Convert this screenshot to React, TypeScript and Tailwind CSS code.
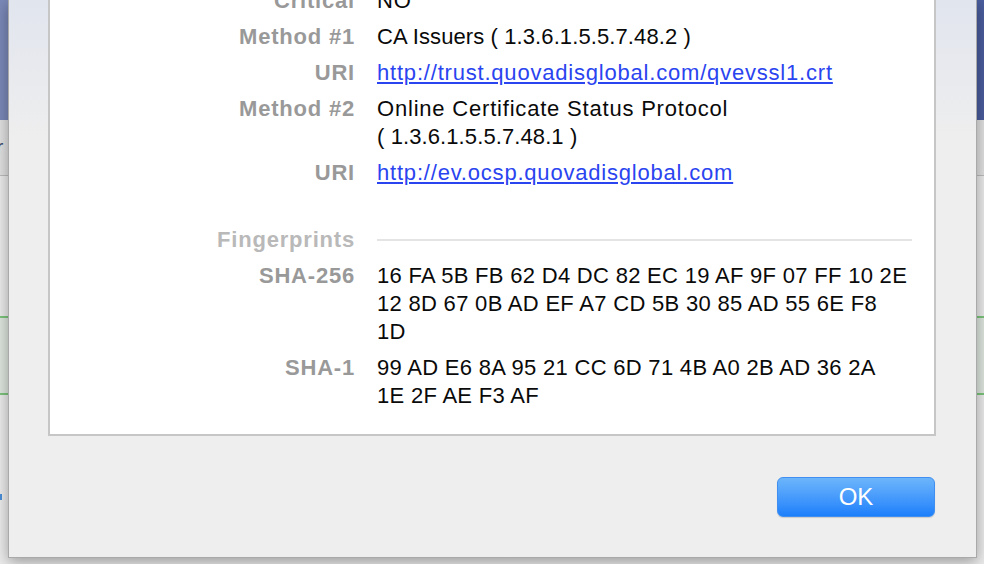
import React from "react";

type Line = { text: string; tight?: boolean };

const rows: { label: string; lines: Line[]; link?: boolean }[] = [
  { label: "Critical", lines: [{ text: "NO" }] },
  { label: "Method #1", lines: [{ text: "CA Issuers ( 1.3.6.1.5.5.7.48.2 )", tight: true }] },
  { label: "URI", lines: [{ text: "http://trust.quovadisglobal.com/qvevssl1.crt" }], link: true },
  {
    label: "Method #2",
    lines: [{ text: "Online Certificate Status Protocol" }, { text: "( 1.3.6.1.5.5.7.48.1 )", tight: true }],
  },
  { label: "URI", lines: [{ text: "http://ev.ocsp.quovadisglobal.com" }], link: true },
];

const prints: { label: string; lines: string[] }[] = [
  {
    label: "SHA-256",
    lines: [
      "16 FA 5B FB 62 D4 DC 82 EC 19 AF 9F 07 FF 10 2E",
      "12 8D 67 0B AD EF A7 CD 5B 30 85 AD 55 6E F8",
      "1D",
    ],
  },
  {
    label: "SHA-1",
    lines: ["99 AD E6 8A 95 21 CC 6D 71 4B A0 2B AD 36 2A", "1E 2F AE F3 AF"],
  },
];

function Label({ children }: { children: React.ReactNode }) {
  return <div className="text-right font-bold text-[#999999] tracking-[0.8px]">{children}</div>;
}

export default function App() {
  return (
    <div
      className="relative w-[984px] h-[564px] overflow-hidden bg-[#ececec]"
      style={{ fontFamily: '"Liberation Sans", Arial, sans-serif' }}
    >
      {/* window behind the sheet */}
      <div className="flex flex-col">
        <div className="h-[120px] bg-gradient-to-r from-[#7b89b9] to-[#4a5d9e]" />
        <div className="h-[56px] bg-[#e2e2e2] border-b border-[#bdbdbd] flex items-center">
          <span className="-ml-[4px] text-[22px] text-[#3b4d6e]">r</span>
        </div>
        <div className="h-[140px]" />
        <div className="h-[79px] bg-[#dfe6df] border-y-2 border-[#7cc57c]" />
        <div className="h-[99px]" />
        <div className="w-[2px] h-[6px] bg-[#4a8fd8]" />
      </div>

      {/* sheet */}
      <div className="absolute left-[8px] top-0 w-[969px] h-[558px] flex flex-col border-x border-b border-[#a9a9a9] bg-gradient-to-b from-[#e1e5ee] via-[#eeeeee] via-25% to-[#eeeeee] shadow-[0_4px_14px_rgba(0,0,0,0.35)] overflow-hidden">
        <div className="-mt-[13px] ml-[39px] w-[888px] bg-white border-x-2 border-b-2 border-[#c6c6c6] pr-[22px] pb-[24px] text-[22px] leading-[28px]">
          <div className="grid grid-cols-[305px_1fr] gap-x-[22px] gap-y-[8px]">
            {rows.map((r, i) => (
              <React.Fragment key={i}>
                <Label>{r.label}</Label>
                <div className="whitespace-nowrap">
                  {r.lines.map((l, j) =>
                    r.link ? (
                      <a key={j} href="#" className="block text-[#2a44f0] underline underline-offset-2 tracking-[0.8px]">
                        {l.text}
                      </a>
                    ) : (
                      <div
                        key={j}
                        className={l.tight ? "text-[#0a0a0a] tracking-[0.1px]" : "text-[#0a0a0a] tracking-[0.8px]"}
                      >
                        {l.text}
                      </div>
                    )
                  )}
                </div>
              </React.Fragment>
            ))}

            <div className="mt-[31px] text-right font-bold text-[#b9b9b9] tracking-[0.8px]">Fingerprints</div>
            <div className="mt-[31px] flex items-center">
              <div className="h-[2px] flex-1 bg-[#e4e4e4]" />
            </div>

            {prints.map((r, i) => (
              <React.Fragment key={i}>
                <Label>{r.label}</Label>
                <div className="whitespace-nowrap tracking-[0.3px] text-[#0a0a0a]">
                  {r.lines.map((l, j) => (
                    <div key={j}>{l}</div>
                  ))}
                </div>
              </React.Fragment>
            ))}
          </div>
        </div>

        <div className="mt-[41px] mr-[41px] flex justify-end">
          <button className="w-[158px] h-[40px] rounded-[6px] border border-[#3f8ef0] bg-gradient-to-b from-[#6cb5fb] to-[#1b7ffb] text-white text-[24px] leading-none shadow-[0_1px_1px_rgba(0,0,0,0.15)]">
            OK
          </button>
        </div>
      </div>
    </div>
  );
}
